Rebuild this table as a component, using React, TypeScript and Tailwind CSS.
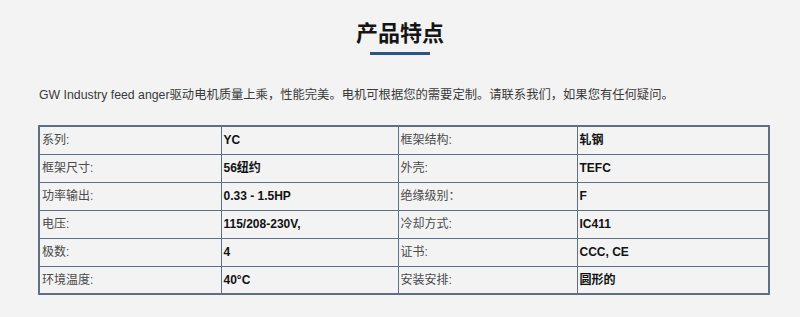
const rows: [string, string, string, string][] = [
  ["系列:", "YC", "框架结构:", "轧钢"],
  ["框架尺寸:", "56纽约", "外壳:", "TEFC"],
  ["功率输出:", "0.33 - 1.5HP", "绝缘级别：", "F"],
  ["电压:", "115/208-230V,", "冷却方式:", "IC411"],
  ["极数:", "4", "证书:", "CCC, CE"],
  ["环境温度:", "40°C", "安装安排:", "圆形的"],
];

export default function App() {
  return (
    <div className="w-[800px] h-[317px] bg-[#f3f3f3] font-['Liberation_Sans','Noto_Sans_CJK_SC',sans-serif] text-[#333]">
      {/* heading */}
      <div className="flex flex-col items-center pt-[19px]">
        <h2 className="text-[22px] leading-[30px] font-bold text-[#151515]">产品特点</h2>
        <div className="mt-[3px] w-[60px] h-[3px] bg-[#2a5484]" />
      </div>

      <p className="mt-[30px] px-[39px] text-[12.3px] leading-[20px] text-[#3a3a3a]">
        GW Industry feed anger驱动电机质量上乘，性能完美。电机可根据您的需要定制。请联系我们，如果您有任何疑问。
      </p>

      <div className="px-[38px] mt-[20px]">
        <table className="w-[730px] border-collapse border-2 border-[#5f6f84] text-[12px] table-fixed">
          <colgroup>
            <col className="w-[182px]" />
            <col className="w-[177px]" />
            <col className="w-[179px]" />
            <col className="w-[192px]" />
          </colgroup>
          <tbody>
            {rows.map((r) => (
              <tr key={r[0]} className="h-[28px]">
                <td className="border border-[#5f6f84] px-[2px] text-[#4a4a4a]">{r[0]}</td>
                <td className="border border-[#5f6f84] px-[2px] font-bold text-[#111]">{r[1]}</td>
                <td className="border border-[#5f6f84] px-[2px] text-[#4a4a4a]">{r[2]}</td>
                <td className="border border-[#5f6f84] px-[2px] font-bold text-[#111]">{r[3]}</td>
              </tr>
            ))}
          </tbody>
        </table>
      </div>
    </div>
  );
}
